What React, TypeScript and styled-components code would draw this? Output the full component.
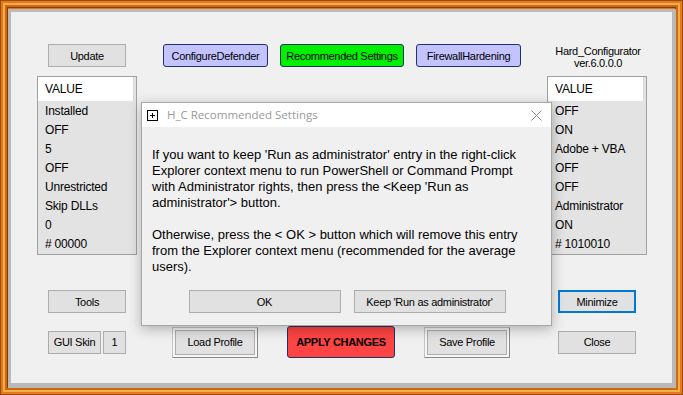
import React from "react";
import styled, { createGlobalStyle, css } from "styled-components";

const Global = createGlobalStyle`
  html, body { margin: 0; padding: 0; width: 683px; height: 395px; overflow: hidden; background: #f0f0f0; }
  * { box-sizing: border-box; }
`;

const Frame = styled.div`
  position: relative;
  width: 683px;
  height: 395px;
  padding: 9px 7px 7px 8px;
  background: #e07818;
  box-shadow:
    inset 0 0 0 1px #9c4a00,
    inset 0 0 0 3px #e27a1a,
    inset 0 0 0 5px #f2ae4e,
    inset 0 0 0 7px #d06810,
    inset 0 0 0 8px #8a3a00;
  font-family: "Liberation Sans", Arial, sans-serif;
`;

const Bevel = styled.div`
  width: 100%;
  height: 100%;
  background: #b9b9b9;
  padding: 3px 4px 5px 3px;
`;

const Content = styled.div`
  width: 100%;
  height: 100%;
  background: #f0f0f0;
  padding: 32px 0 0 26px;
  display: grid;
  grid-template-columns: 100px 410px 100px;
  grid-template-rows: 32px 179px 58px 13px 32px;
`;

const Cell = styled.div<{ $col: number; $row: number; $align?: string }>`
  grid-column: ${(p) => p.$col};
  grid-row: ${(p) => p.$row};
  align-self: ${(p) => p.$align || "start"};
  display: flex;
  justify-content: center;
  gap: 2px;
`;

const btnText = css`
  font-family: "Liberation Sans", Arial, sans-serif;
  font-size: 11px;
  letter-spacing: -0.3px;
  color: #000;
  display: flex;
  align-items: center;
  justify-content: center;
  padding: 0;
`;

const GreyButton = styled.div<{ $w: number; $focus?: boolean }>`
  ${btnText};
  width: ${(p) => p.$w}px;
  height: 23px;
  background: #e1e1e1;
  border: ${(p) => (p.$focus ? "2px solid #0078d7" : "1px solid #adadad")};
`;

const ColorButton = styled.div<{ $w: number; $bg: string; $h?: number; $bold?: boolean }>`
  ${btnText};
  width: ${(p) => p.$w}px;
  height: ${(p) => p.$h || 23}px;
  background: ${(p) => p.$bg};
  border: 1px solid #1c3566;
  border-radius: 3px;
  ${(p) =>
    p.$bold &&
    css`
      font-weight: bold;
    `}
`;

const RaisedButton = styled.div<{ $w: number }>`
  ${btnText};
  width: ${(p) => p.$w}px;
  height: 31px;
  background: #e1e1e1;
  border: 1px solid;
  border-color: #c4c4c4 #8a8a8a #8a8a8a #c4c4c4;
  box-shadow: inset 0 0 0 2px #f6f6f6, inset 0 0 0 3px #adadad;
`;

const ButtonRow = styled.div<{ $gap: number }>`
  grid-column: 2;
  display: flex;
  justify-content: center;
  align-items: center;
  gap: ${(p) => p.$gap}px;
`;

const TopRow = styled(ButtonRow)`
  grid-row: 1;
  align-self: start;
`;

const BottomRow = styled(ButtonRow)`
  grid-row: 5;
  align-self: center;
  padding-right: 2px;
`;

const AppLabel = styled.div`
  grid-column: 3;
  grid-row: 1;
  align-self: start;
  text-align: center;
  font-size: 11px;
  letter-spacing: -0.3px;
  line-height: 12px;
  padding-top: 1px;
  padding-left: 2px;
  color: #000;
`;

const List = styled.div<{ $col: number }>`
  grid-column: ${(p) => p.$col};
  grid-row: 2;
  border: 1px solid #a0a0a0;
  background: #e3e3e3;
  display: flex;
  flex-direction: column;
  font-size: 12px;
  letter-spacing: -0.2px;
  color: #000;
`;

const ListHeader = styled.div`
  height: 24px;
  background: #fff;
  margin-right: 2px;
  border-right: 1px solid #d8d8d8;
  display: flex;
  align-items: center;
  padding-left: 7px;
`;

const ListRow = styled.div`
  height: 19px;
  display: flex;
  align-items: center;
  padding-left: 7px;
  padding-top: 1px;
`;

const Dialog = styled.div`
  position: absolute;
  left: 141px;
  top: 102px;
  width: 411px;
  height: 224px;
  border: 1px solid #a6a6a6;
  background: #f0f0f0;
  box-shadow: 0 3px 12px rgba(0, 0, 0, 0.28);
  display: flex;
  flex-direction: column;
`;

const TitleBar = styled.div`
  height: 24px;
  background: #fff;
  display: flex;
  align-items: center;
  padding: 0 9px 0 5px;
  gap: 9px;
`;

const TitleText = styled.div`
  flex: 1;
  font-family: "Open Sans", "Noto Sans", sans-serif;
  font-size: 11.5px;
  color: #9a9a9a;
  padding-bottom: 1px;
`;

const DialogBody = styled.div`
  padding: 20px 10px 0 10px;
  font-size: 13px;
  line-height: 16px;
  color: #000;
  white-space: nowrap;
`;

const DialogButtons = styled.div`
  display: flex;
  justify-content: center;
  gap: 13px;
  margin-top: 15px;
  padding-left: 1px;
`;

const DlgButton = styled.div`
  ${btnText};
  width: 152px;
  height: 23px;
  background: #e1e1e1;
  border: 1px solid #adadad;
`;

const leftValues = ["Installed", "OFF", "5", "OFF", "Unrestricted", "Skip DLLs", "0", "# 00000"];
const rightValues = ["OFF", "ON", "Adobe + VBA", "OFF", "OFF", "Administrator", "ON", "# 1010010"];

export default function App() {
  return (
    <>
      <Global />
      <Frame>
        <Bevel>
          <Content>
            <Cell $col={1} $row={1}>
              <GreyButton $w={78}>Update</GreyButton>
            </Cell>
            <TopRow $gap={12}>
              <ColorButton $w={105} $bg="#c3c3ff">ConfigureDefender</ColorButton>
              <ColorButton $w={124} $bg="#00f000">Recommended Settings</ColorButton>
              <ColorButton $w={105} $bg="#c3c3ff">FirewallHardening</ColorButton>
            </TopRow>
            <AppLabel>
              Hard_Configurator
              <br />
              ver.6.0.0.0
            </AppLabel>

            <List $col={1}>
              <ListHeader>VALUE</ListHeader>
              {leftValues.map((v, i) => (
                <ListRow key={i}>{v}</ListRow>
              ))}
            </List>
            <List $col={3}>
              <ListHeader>VALUE</ListHeader>
              {rightValues.map((v, i) => (
                <ListRow key={i}>{v}</ListRow>
              ))}
            </List>

            <Cell $col={1} $row={3} $align="end">
              <GreyButton $w={78}>Tools</GreyButton>
            </Cell>
            <Cell $col={3} $row={3} $align="end">
              <GreyButton $w={78} $focus>
                Minimize
              </GreyButton>
            </Cell>

            <Cell $col={1} $row={5} $align="center">
              <GreyButton $w={53}>GUI Skin</GreyButton>
              <GreyButton $w={23}>1</GreyButton>
            </Cell>
            <BottomRow $gap={29}>
              <RaisedButton $w={86}>Load Profile</RaisedButton>
              <ColorButton $w={108} $h={32} $bg="#ff4444" $bold>
                APPLY CHANGES
              </ColorButton>
              <RaisedButton $w={86}>Save Profile</RaisedButton>
            </BottomRow>
            <Cell $col={3} $row={5} $align="center">
              <GreyButton $w={78}>Close</GreyButton>
            </Cell>
          </Content>
        </Bevel>

        <Dialog>
          <TitleBar>
            <svg width="11" height="11" viewBox="0 0 11 11">
              <rect x="0.5" y="0.5" width="10" height="10" fill="#fff" stroke="#000" />
              <path d="M3 5.5h5M5.5 3v5" stroke="#000" strokeWidth="1" />
            </svg>
            <TitleText>H_C Recommended Settings</TitleText>
            <svg width="11" height="11" viewBox="0 0 11 11">
              <path d="M0.5 0.5l10 10M10.5 0.5l-10 10" stroke="#8a8a8a" strokeWidth="1" />
            </svg>
          </TitleBar>
          <DialogBody>
            If you want to keep 'Run as administrator' entry in the right-click
            <br />
            Explorer context menu to run PowerShell or Command Prompt
            <br />
            with Administrator rights, then press the &lt;Keep 'Run as
            <br />
            administrator'&gt; button.
            <br />
            <br />
            Otherwise, press the &lt; OK &gt; button which will remove this entry
            <br />
            from the Explorer context menu (recommended for the average
            <br />
            users).
          </DialogBody>
          <DialogButtons>
            <DlgButton>OK</DlgButton>
            <DlgButton>Keep 'Run as administrator'</DlgButton>
          </DialogButtons>
        </Dialog>
      </Frame>
    </>
  );
}
